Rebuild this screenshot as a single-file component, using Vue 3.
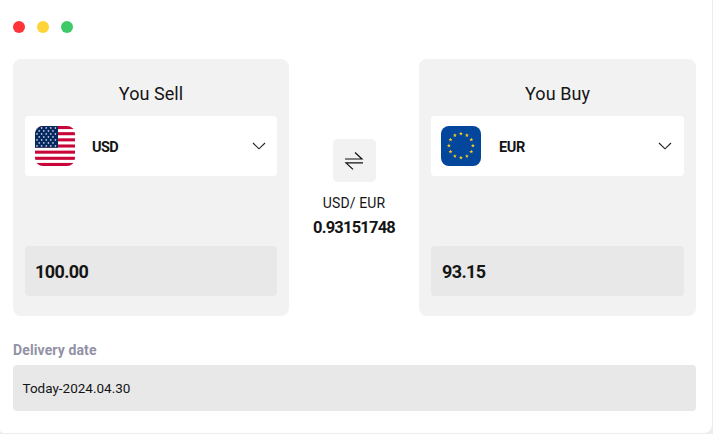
<script setup>
const sides = [
  { title: 'You Sell', code: 'USD', amount: '100.00' },
  { title: 'You Buy', code: 'EUR', amount: '93.15' }
]

const smallStars = []
for (let row = 0; row < 7; row++) {
  for (let col = 0; col < 5; col++) {
    const x = 2 + col * 4.6 + (row % 2) * 2.2
    if (x < 22) smallStars.push({ x, y: 2 + row * 3 })
  }
}

const starPath = (cx, cy, r) =>
  Array.from({ length: 10 }, (_, i) => {
    const a = (i * Math.PI) / 5 - Math.PI / 2
    const d = i % 2 ? r * 0.42 : r
    return `${(cx + d * Math.cos(a)).toFixed(2)},${(cy + d * Math.sin(a)).toFixed(2)}`
  }).join(' ')

const euStars = Array.from({ length: 12 }, (_, i) => {
  const a = (i * Math.PI) / 6
  return starPath(19.9 + 12 * Math.sin(a), 19.7 - 12 * Math.cos(a), 2.1)
})
</script>

<template>
  <main class="window">
    <div class="dots"><i class="red"></i><i class="yellow"></i><i class="green"></i></div>
    <div class="exchange">
      <template v-for="(side, index) in sides" :key="side.code">
        <section class="panel">
          <h2>{{ side.title }}</h2>
          <div class="currency">
            <svg v-if="side.code === 'USD'" class="flag" viewBox="0 0 40 40">
              <rect width="40" height="40" fill="#fff" />
              <rect v-for="n in 7" :key="n" y="0" width="40" height="3.08" :transform="`translate(0 ${(n - 1) * 6.154})`" fill="#c8063a" />
              <rect width="23" height="21.7" fill="#062861" />
              <polygon v-for="(s, i) in smallStars" :key="i" :points="starPath(s.x, s.y, 1.15)" fill="#fff" />
            </svg>
            <svg v-else class="flag" viewBox="0 0 40 40">
              <rect width="40" height="40" fill="#03479c" />
              <polygon v-for="(p, i) in euStars" :key="i" :points="p" fill="#f8cc20" />
            </svg>
            <span class="code">{{ side.code }}</span>
            <svg class="chevron" viewBox="0 0 14 8"><path d="M1 1l6 5.8L13 1" fill="none" stroke="#202020" stroke-width="1.1" /></svg>
          </div>
          <div class="amount"><span>{{ side.amount }}</span></div>
        </section>
        <div v-if="index === 0" class="middle">
          <button class="swap" aria-label="Swap">
            <svg viewBox="0 0 20 18"><path d="M1 7h17L11 .5M19 10.9H2l7 6.5" fill="none" stroke="#111" stroke-width="1.2" /></svg>
          </button>
          <div class="pair">USD/ EUR</div>
          <div class="rate">0.93151748</div>
        </div>
      </template>
    </div>
    <label class="label"><span>Delivery date</span></label>
    <div class="date"><span>Today-2024.04.30</span></div>
  </main>
</template>

<style>
body { background: #ececec; }
</style>

<style scoped>
* { box-sizing: border-box; }
.window {
  width: 712px; height: 433px; padding: 21px 16px 0 13px;
  background: #fff; border-radius: 0 0 8px 4px;
  font-family: Roboto, "Liberation Sans", sans-serif; color: #151515;
}
.dots { display: flex; gap: 12px; height: 38px; }
.dots i { width: 12px; height: 12px; border-radius: 50%; }
.red { background: #ff3438; }
.yellow { background: #ffd438; }
.green { background: #3fca69; }
.exchange { display: grid; grid-template-columns: 276px 130px 277px; height: 257px; }
.panel { padding: 22px 12px 20px; border-radius: 8px; background: #f2f2f2; display: flex; flex-direction: column; }
h2 { margin: 0 0 9px; height: 26px; line-height: 26px; font-size: 18px; font-weight: 400; letter-spacing: .05px; text-align: center; }
.currency { height: 60px; background: #fff; border-radius: 4px; display: flex; align-items: center; padding: 0 12px 0 10px; }
.panel:first-child .currency { padding-right: 11px; }
.flag { width: 40px; height: 40px; border-radius: 8px; }
.code { margin-left: 17px; font-size: 14.5px; font-weight: 700; letter-spacing: -.6px; line-height: 20px; padding-top: 3px; }
.panel:last-child .code { margin-left: 18px; letter-spacing: -.3px; }
.chevron { width: 14px; height: 8px; margin-left: auto; }
.amount { height: 50px; margin-top: auto; padding: 1px 10px 0; display: flex; align-items: center; background: #e8e8e8; border-radius: 4px; font-size: 18px; font-weight: 700; letter-spacing: -.6px; }
.panel:last-child .amount { padding-left: 11px; }
.middle { display: flex; flex-direction: column; align-items: center; padding-top: 80px; }
.swap { width: 43px; height: 43px; padding: 0; border: 0; border-radius: 5px; background: #f2f2f2; display: flex; align-items: center; justify-content: center; }
.swap svg { width: 20px; height: 18px; }
.pair { margin-top: 10px; line-height: 22px; font-size: 14px; letter-spacing: .1px; }
.rate { margin-top: 2px; line-height: 24px; font-size: 16.5px; font-weight: 700; letter-spacing: -.8px; }
.label { display: block; margin-top: 24px; height: 25px; line-height: 20px; font-size: 14px; font-weight: 700; letter-spacing: .12px; color: #9291a5; }
.date { height: 46px; padding: 0 9.5px; display: flex; align-items: center; background: #e8e8e8; border-radius: 4px; font-size: 13.5px; }
</style>
